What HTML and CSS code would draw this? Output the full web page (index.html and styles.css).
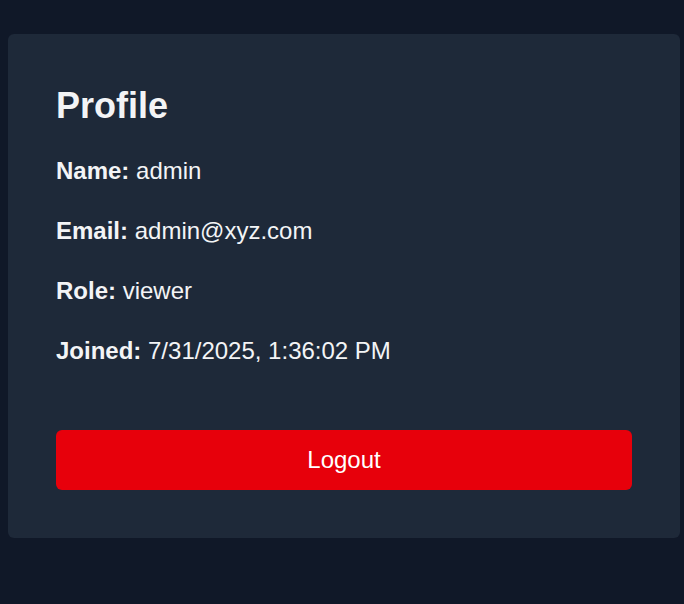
FILE: index.html
```html
<!DOCTYPE html>
<html lang="en">

<head>
    <meta charset="UTF-8">
    <meta name="viewport" content="width=device-width, initial-scale=1.0">
    <title>Profile</title>
    <link rel="stylesheet" href="styles.css">
</head>

<body>
    <div class="profile-card">
        <h1 class="profile-title">Profile</h1>
        <div class="profile-info">
            <p><strong>Name:</strong> admin</p>
            <p><strong>Email:</strong> admin@xyz.com</p>
            <p><strong>Role:</strong> viewer</p>
            <p><strong>Joined:</strong> 7/31/2025, 1:36:02 PM</p>
        </div>
        <button class="logout-btn">Logout</button>
    </div>
</body>

</html>
```

FILE: styles.css
```css
html,
body {
    margin: 0;
    padding: 0;
}

body {
    min-height: 100vh;
    background: #101828;
    color: #f3f4f6;
    font-family: "Liberation Sans", Arial, sans-serif;
}

.profile-card {
    margin: 34px 4px 0 8px;
    padding: 48px;
    background: #1e2939;
    border-radius: 6px;
}

.profile-title {
    margin: 0 0 23px;
    font-size: 36px;
    line-height: 48px;
    font-weight: bold;
}

.profile-info {
    display: flex;
    flex-direction: column;
    gap: 24px;
}

.profile-info p {
    margin: 0;
    font-size: 24px;
    line-height: 36px;
}

.logout-btn {
    display: block;
    width: 100%;
    height: 60px;
    margin-top: 61px;
    border: none;
    border-radius: 6px;
    background: #e7000b;
    color: #fff;
    font-family: inherit;
    font-size: 24px;
    cursor: pointer;
}
```
